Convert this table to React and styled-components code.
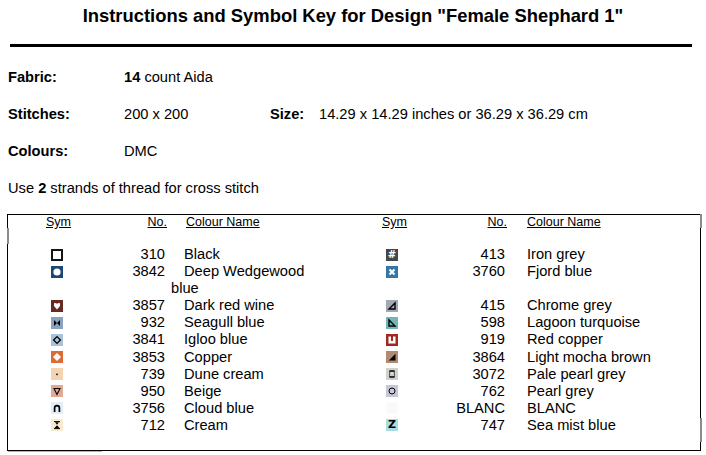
import React from 'react';
import styled, { createGlobalStyle } from 'styled-components';

const GlobalStyle = createGlobalStyle`
  html, body {
    margin: 0;
    padding: 0;
    background: #fff;
  }
  body {
    font-family: "Liberation Sans", Arial, sans-serif;
    color: #000;
  }
`;

const Page = styled.div`
  width: 706px;
  height: 455px;
  overflow: hidden;
`;

const Title = styled.h1`
  margin: 0;
  padding-top: 5px;
  font-size: 18.4px;
  line-height: 21px;
  font-weight: bold;
  text-align: center;
`;

const Rule = styled.div`
  margin: 18px 0 0 10px;
  width: 682px;
  height: 3px;
  background: #000;
`;

const Info = styled.div`
  display: flex;
  flex-direction: column;
  gap: 20px;
  margin-top: 21.5px;
  padding-left: 8px;
  font-size: 14.67px;
  line-height: 17px;
`;

const InfoRow = styled.div`
  display: flex;
`;

const Label = styled.span`
  font-weight: bold;
  width: ${(p) => p.$w || 116}px;
  flex: none;
`;

const Value = styled.span`
  width: ${(p) => (p.$w ? `${p.$w}px` : 'auto')};
  flex: none;
`;

const Table = styled.div`
  position: relative;
  box-sizing: border-box;
  margin: 17.5px 0 0 7px;
  width: 694px;
  height: 237px;
  border: 1px solid #000;
`;

const cols = '98px 65px 150px 132px 61px 1fr';

const HeadGrid = styled.div`
  display: grid;
  grid-template-columns: ${cols};
  font-size: 12.5px;
  line-height: 14px;
`;

const HeadCell = styled.span`
  text-decoration: underline;
  text-underline-offset: 1px;
  text-align: ${(p) => p.$align || 'left'};
  padding-right: ${(p) => p.$pr || 0}px;
  padding-left: ${(p) => p.$pl || 0}px;
`;

const BodyGrid = styled.div`
  display: grid;
  grid-template-columns: ${cols};
  margin-top: 17px;
  font-size: 14.67px;
  line-height: 17.1px;
`;

const SymCell = styled.div`
  display: flex;
  justify-content: center;
  align-items: flex-start;
  padding-top: 2.5px;
  padding-left: ${(p) => p.$pl || 0}px;
`;

const NoCell = styled.div`
  text-align: right;
  white-space: nowrap;
  padding-right: ${(p) => p.$pr}px;
`;

const NameCell = styled.div`
  text-indent: 13px;
`;

const Swatch = styled.span`
  display: flex;
  align-items: center;
  justify-content: center;
  width: 12px;
  height: 12px;
  background: ${(p) => p.$bg};
  color: ${(p) => p.$fg || '#000'};
  font-family: "DejaVu Sans", sans-serif;
  font-weight: bold;
  font-size: ${(p) => p.$fs || 10}px;
  line-height: 12px;
  overflow: hidden;
`;

const Mark = styled.span`
  position: absolute;
  background: ${(p) => p.$c || '#8c8c8c'};
`;

const glyphs = {
  frame: (
    <>
      <rect x="0" y="0" width="12" height="12" fill="#141414" />
      <rect x="2" y="2" width="8" height="8" fill="#fff" />
    </>
  ),
  dot: <circle cx="6" cy="6" r="3.6" fill="#fff" />,
  heart: <path d="M3 3.3 Q4.5 2.4 6 3.8 Q7.5 2.4 9 3.3 L9 6 L6 9.6 L3 6 Z" fill="#fff" />,
  bow: <path d="M3 3 L6 6 L3 9 Z M9 3 L6 6 L9 9 Z" fill="#000" />,
  diamond: <path d="M6 2.6 L9.4 6 L6 9.4 L2.6 6 Z" fill="none" stroke="#000" strokeWidth="1.3" />,
  diamondFill: <path d="M6 2 L10 6 L6 10 L2 6 Z" fill="#fff" />,
  point: <circle cx="6" cy="6.3" r="0.9" fill="#000" />,
  tri: <path d="M3 3.5 H9 L6 9.5 Z" fill="none" stroke="#000" strokeWidth="1.1" />,
  arch: <path d="M3.6 10 V6 A2.4 2.4 0 0 1 8.4 6 V10" fill="none" stroke="#000" strokeWidth="1.7" />,
  glass: (
    <>
      <path d="M3 2.6 H9 M3 9.6 H9" stroke="#000" strokeWidth="1" />
      <path d="M4 3.2 H8 L6 5.8 Z M6 6.2 L8.5 9 H3.5 Z" fill="#000" />
    </>
  ),
  cross: <path d="M3.5 3.5 L8.5 8.5 M8.5 3.5 L3.5 8.5" stroke="#fff" strokeWidth="2" />,
  wedge: <path d="M9 3 V9 H3 Z" fill="none" stroke="#000" strokeWidth="1.4" strokeLinejoin="miter" />,
  wedgeL: <path d="M3 3 V9 H9 Z" fill="none" stroke="#000" strokeWidth="1.4" />,
  cup: <path d="M2.5 2.5 H5 V7 H7 V2.5 H9.5 V9.5 H2.5 Z" fill="#fff" />,
  wedgeFill: <path d="M9.5 2.8 V9.5 H2.8 Z" fill="#000" />,
  box: (
    <>
      <path d="M3.5 3 H8.5 M3.5 9 H8.5" stroke="#000" strokeWidth="1.5" />
      <path d="M3.6 3 V9 M8.4 3 V9" stroke="#000" strokeWidth="0.6" />
    </>
  ),
  ring: <circle cx="6" cy="6" r="3" fill="none" stroke="#000" strokeWidth="1" />,
  blank: null,
};

const Sym = ({ kind, bg, text, fg }) => {
  if (text) {
    return (
      <Swatch $bg={bg} $fg={fg} $fs={text === 'Z' ? 11 : 10}>
        {text}
      </Swatch>
    );
  }
  return (
    <Swatch $bg={bg}>
      <svg width="12" height="12" viewBox="0 0 12 12">
        {glyphs[kind]}
      </svg>
    </Swatch>
  );
};

const left = [
  { kind: 'frame', bg: '#fff', no: '310', name: 'Black' },
  { kind: 'dot', bg: '#1c4878', no: '3842', name: 'Deep Wedgewood blue' },
  { kind: 'heart', bg: '#6a2a24', no: '3857', name: 'Dark red wine' },
  { kind: 'bow', bg: '#8aa2bd', no: '932', name: 'Seagull blue' },
  { kind: 'diamond', bg: '#a9c2d8', no: '3841', name: 'Igloo blue' },
  { kind: 'diamondFill', bg: '#de6b36', no: '3853', name: 'Copper' },
  { kind: 'point', bg: '#f3d3b2', no: '739', name: 'Dune cream' },
  { kind: 'tri', bg: '#e2aa94', no: '950', name: 'Beige' },
  { kind: 'arch', bg: '#e2edf5', no: '3756', name: 'Cloud blue' },
  { kind: 'glass', bg: '#f6ead3', no: '712', name: 'Cream' },
];

const right = [
  { text: '#', bg: '#474747', fg: '#fff', no: '413', name: 'Iron grey' },
  { kind: 'cross', bg: '#3576a2', no: '3760', name: 'Fjord blue' },
  { kind: 'wedge', bg: '#a4a8b3', no: '415', name: 'Chrome grey' },
  { kind: 'wedgeL', bg: '#74b6b6', no: '598', name: 'Lagoon turquoise' },
  { kind: 'cup', bg: '#a12a20', no: '919', name: 'Red copper' },
  { kind: 'wedgeFill', bg: '#b08a73', no: '3864', name: 'Light mocha brown' },
  { kind: 'box', bg: '#cfd3cb', no: '3072', name: 'Pale pearl grey' },
  { kind: 'ring', bg: '#c8c7da', no: '762', name: 'Pearl grey' },
  { kind: 'blank', bg: '#fafafa', no: 'BLANC', name: 'BLANC' },
  { text: 'Z', bg: '#a7dde3', fg: '#000', no: '747', name: 'Sea mist blue' },
];

// right column leaves an empty line where the left name wraps
const rightRows = [right[0], right[1], null, ...right.slice(2)];

export default function App() {
  const rows = [];
  let r = 0;
  left.forEach((item, i) => {
    rows.push({ l: item, r: rightRows[r] });
    r += 1;
    if (i === 1) r += 1;
  });

  return (
    <Page>
      <GlobalStyle />
      <Title>Instructions and Symbol Key for Design "Female Shephard 1"</Title>
      <Rule />
      <Info>
        <InfoRow>
          <Label>Fabric:</Label>
          <Value>
            <b>14</b> count Aida
          </Value>
        </InfoRow>
        <InfoRow>
          <Label>Stitches:</Label>
          <Value $w={146}>200 x 200</Value>
          <Label $w={49}>Size:</Label>
          <Value>14.29 x 14.29 inches or 36.29 x 36.29 cm</Value>
        </InfoRow>
        <InfoRow>
          <Label>Colours:</Label>
          <Value>DMC</Value>
        </InfoRow>
        <InfoRow>
          <Value>
            Use <b>2</b> strands of thread for cross stitch
          </Value>
        </InfoRow>
      </Info>
      <Table>
        <HeadGrid>
          <HeadCell $align="center" $pl={3}>Sym</HeadCell>
          <HeadCell $align="right" $pr={4}>No.</HeadCell>
          <HeadCell $pl={15}>Colour Name</HeadCell>
          <HeadCell $align="center" $pl={15}>Sym</HeadCell>
          <HeadCell $align="right" $pr={7}>No.</HeadCell>
          <HeadCell $pl={13}>Colour Name</HeadCell>
        </HeadGrid>
        <BodyGrid>
          {rows.map(({ l, r: rt }, i) => (
            <React.Fragment key={i}>
              <SymCell>
                <Sym {...l} />
              </SymCell>
              <NoCell $pr={6}>{l.no}</NoCell>
              <NameCell>{l.name}</NameCell>
              <SymCell $pl={10}>{rt && <Sym {...rt} />}</SymCell>
              <NoCell $pr={9}>{rt && rt.no}</NoCell>
              <NameCell>{rt && rt.name}</NameCell>
            </React.Fragment>
          ))}
        </BodyGrid>
        <Mark style={{ left: -1, top: 13, width: 2, height: 16 }} />
        <Mark style={{ right: -2, top: -1, width: 2, height: 14 }} />
        <Mark style={{ right: -2, top: 203, width: 2, height: 24 }} />
        <Mark $c="#b4b4b4" style={{ left: 0, top: 236, width: 94, height: 1 }} />
      </Table>
    </Page>
  );
}
